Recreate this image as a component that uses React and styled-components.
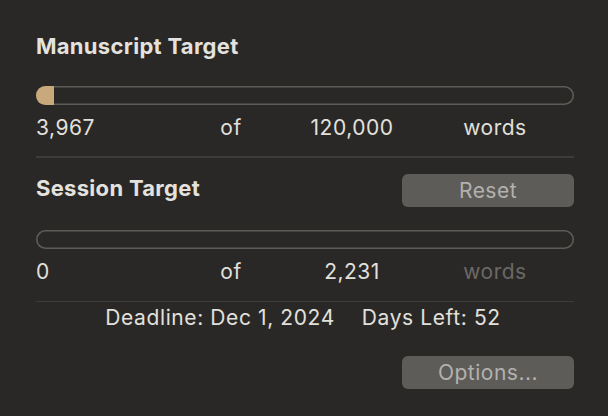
import React from 'react';
import styled, { createGlobalStyle } from 'styled-components';

const GlobalStyle = createGlobalStyle`
  html, body {
    margin: 0;
    padding: 0;
    background: #2a2826;
  }
  body {
    font-family: Inter, "Noto Sans", "Liberation Sans", sans-serif;
    -webkit-font-smoothing: antialiased;
  }
`;

const Panel = styled.div`
  width: 608px;
  height: 416px;
  box-sizing: border-box;
  padding: 33px 34px 0 36px;
  background: #2a2826;
  color: #e2e0dd;
  display: flex;
  flex-direction: column;
`;

const Section = styled.section`
  display: flex;
  flex-direction: column;
`;

const Header = styled.div`
  display: flex;
  align-items: flex-start;
  justify-content: space-between;
  margin-top: ${p => p.mt || 0}px;
`;

const Title = styled.h2`
  margin: ${p => p.mt || 0}px 0 0 0;
  font-size: 22px;
  line-height: 26px;
  font-weight: 700;
  letter-spacing: 0.3px;
  color: #e4e2df;
`;

const Track = styled.div`
  height: 19px;
  border-radius: 10px;
  box-shadow: inset 0 0 0 1.6px #5f5c58;
  overflow: hidden;
  margin-top: ${p => p.mt}px;
`;

const Fill = styled.div`
  height: 100%;
  background: #c9a97b;
`;

const Counts = styled.div`
  display: grid;
  grid-template-columns: 150px 90px 152px 134px;
  font-size: 21px;
  line-height: 26px;
  letter-spacing: 0.5px;
  margin-top: 10px;
`;

const Cell = styled.span`
  text-align: ${p => (p.left ? 'left' : 'center')};
  color: ${p => (p.dim ? '#6b6865' : '#e2e0dd')};
`;

const Divider = styled.hr`
  border: none;
  height: 1.5px;
  background: #3e3c39;
  margin: ${p => p.mt}px 0 0 0;
`;

const Button = styled.button`
  width: 172px;
  height: 33px;
  border: none;
  border-radius: 6px;
  background: #5e5c59;
  color: #b3b1ad;
  font-family: inherit;
  font-size: 21px;
  letter-spacing: 0.5px;
  padding: 0;
  cursor: default;
`;

const Deadline = styled.div`
  display: flex;
  justify-content: center;
  gap: 27px;
  font-size: 21px;
  line-height: 26px;
  letter-spacing: 0.6px;
  margin-top: 3px;
  padding-right: 4px;
`;

const Footer = styled.div`
  display: flex;
  justify-content: flex-end;
  margin-top: 25px;
`;

const Progress = ({ value, total, mt }) => (
  <Track mt={mt}>
    <Fill style={{ width: `${Math.max(0, (value / total) * 100)}%` }} />
  </Track>
);

const CountRow = ({ current, target, dimWords }) => (
  <Counts>
    <Cell left>{current}</Cell>
    <Cell>of</Cell>
    <Cell>{target}</Cell>
    <Cell dim={dimWords}>words</Cell>
  </Counts>
);

export default function App() {
  return (
    <>
      <GlobalStyle />
      <Panel>
        <Section>
          <Header>
            <Title>Manuscript Target</Title>
          </Header>
          <Progress value={3967} total={120000} mt={27} />
          <CountRow current="3,967" target="120,000" />
          <Divider mt={15} />
        </Section>
        <Section>
          <Header mt={16}>
            <Title mt={1}>Session Target</Title>
            <Button>Reset</Button>
          </Header>
          <Progress value={0} total={2231} mt={23} />
          <CountRow current="0" target="2,231" dimWords />
          <Divider mt={16} />
        </Section>
        <Deadline>
          <span>Deadline: Dec 1, 2024</span>
          <span>Days Left: 52</span>
        </Deadline>
        <Footer>
          <Button>Options...</Button>
        </Footer>
      </Panel>
    </>
  );
}
